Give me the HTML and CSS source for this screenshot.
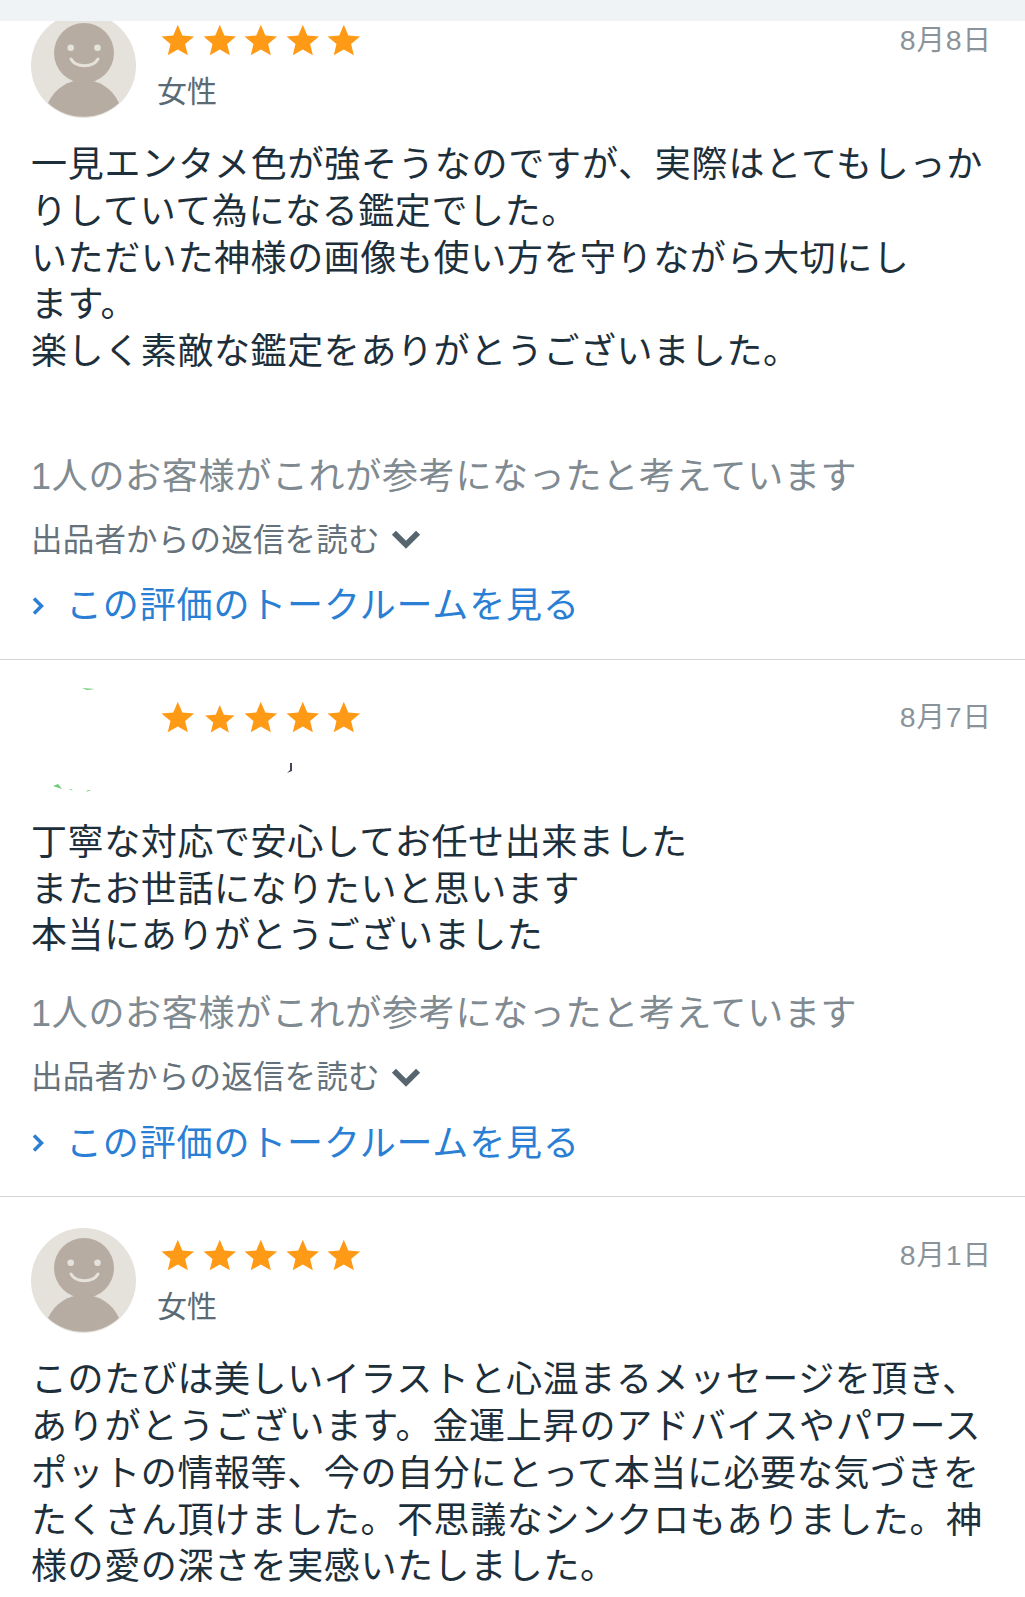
FILE: index.html
```html
<!DOCTYPE html>
<html lang="ja">
<head>
<meta charset="utf-8">
<title>評価</title>
<link rel="stylesheet" href="styles.css">
</head>
<body>
<svg class="defs" width="0" height="0" aria-hidden="true">
  <defs>
    <symbol id="star" viewBox="0 0 34 32"><path d="M17 0.5 21.6 11.4 33.5 12.4 24.4 20.1 27.2 31.5 17 25.6 6.800 31.5 9.600 20.1 0.500 12.4 12.400 11.4Z"/></symbol>
    <symbol id="avatar" viewBox="0 0 105 105">
      <circle cx="52.5" cy="52.5" r="52.5" fill="#e5e2dc"/>
      <circle cx="53" cy="40" r="30" fill="#b7aca2"/>
      <path d="M17 90C24 75 37 67 52.5 67S81 75 88 90A52.5 52.5 0 0 1 17 90Z" fill="#b7aca2"/>
      <circle cx="39.7" cy="34.7" r="3.3" fill="#e5e2dc"/>
      <circle cx="66.5" cy="34.7" r="3.3" fill="#e5e2dc"/>
      <path d="M40 46C45 55 62 55 67 46" fill="none" stroke="#e5e2dc" stroke-width="3" stroke-linecap="round"/>
    </symbol>
    <symbol id="chev-down" viewBox="0 0 28 20"><path d="M2.500 3.500 14 15 25.500 3.500" fill="none" stroke="#57656e" stroke-width="5.500"/></symbol>
    <symbol id="chev-right" viewBox="0 0 12 20"><path d="M2 2.500 9.500 10 2 17.500" fill="none" stroke="#2a7fd4" stroke-width="3.500"/></symbol>
  </defs>
</svg>
<div class="topbar"></div>
<main class="list">
  <article class="review">
    <header class="head">
      <svg class="avatar"><use href="#avatar"/></svg>
      <div class="who">
        <div class="stars">
          <svg class="star"><use href="#star"/></svg><svg class="star"><use href="#star"/></svg><svg class="star"><use href="#star"/></svg><svg class="star"><use href="#star"/></svg><svg class="star"><use href="#star"/></svg>
        </div>
        <div class="name">女性</div>
      </div>
      <time class="date">8月8日</time>
    </header>
    <p class="body"><span class="wide">一見エンタメ色が強そうなのですが、実際はとてもしっか</span><br>りしていて為になる鑑定でした。<br>いただいた神様の画像も使い方を守りながら大切にし<br>ます。<br>楽しく素敵な鑑定をありがとうございました。<br>&nbsp;</p>
    <p class="helpful">1人のお客様がこれが参考になったと考えています</p>
    <div class="reply">出品者からの返信を読む<svg class="chev-down"><use href="#chev-down"/></svg></div>
    <a class="talk"><svg class="chev-right"><use href="#chev-right"/></svg>この評価のトークルームを見る</a>
  </article>
  <article class="review">
    <header class="head">
      <svg class="avatar" viewBox="0 0 105 105">
        <path d="M22 95 31 98 27 93Z M38 98 42 100 40 98Z M55 101 60 99 57 99Z M51 -3 64 -2 56 -1Z" fill="#6ecb73"/>
      </svg>
      <div class="who">
        <div class="stars">
          <svg class="star"><use href="#star"/></svg><svg class="star star-small"><use href="#star"/></svg><svg class="star"><use href="#star"/></svg><svg class="star"><use href="#star"/></svg><svg class="star"><use href="#star"/></svg>
        </div>
        <div class="name name-hidden">&nbsp;<svg class="speck" viewBox="0 0 14 14"><path d="M9 3h2v8l-5 2 3-3Z" fill="#445"/></svg></div>
      </div>
      <time class="date">8月7日</time>
    </header>
    <p class="body">丁寧な対応で安心してお任せ出来ました<br>またお世話になりたいと思います<br>本当にありがとうございました</p>
    <p class="helpful">1人のお客様がこれが参考になったと考えています</p>
    <div class="reply">出品者からの返信を読む<svg class="chev-down"><use href="#chev-down"/></svg></div>
    <a class="talk"><svg class="chev-right"><use href="#chev-right"/></svg>この評価のトークルームを見る</a>
  </article>
  <article class="review">
    <header class="head">
      <svg class="avatar"><use href="#avatar"/></svg>
      <div class="who">
        <div class="stars">
          <svg class="star"><use href="#star"/></svg><svg class="star"><use href="#star"/></svg><svg class="star"><use href="#star"/></svg><svg class="star"><use href="#star"/></svg><svg class="star"><use href="#star"/></svg>
        </div>
        <div class="name">女性</div>
      </div>
      <time class="date">8月1日</time>
    </header>
    <p class="body">このたびは美しいイラストと心温まるメッセージを頂き、<br><span class="wide">ありがとうございます。金運上昇のアドバイスやパワース</span><br>ポットの情報等、今の自分にとって本当に必要な気づきを<br>たくさん頂けました。不思議なシンクロもありました。神<br>様の愛の深さを実感いたしました。</p>
  </article>
</main>
</body>
</html>
```
FILE: styles.css
```css
* { box-sizing: border-box; }
html, body { margin: 0; padding: 0; background: #fff; }
body {
  width: 1025px;
  height: 1597px;
  overflow: hidden;
  position: relative;
  font-family: "Liberation Sans", "Noto Sans CJK JP", sans-serif;
  color: #1d2f3b;
}
.defs { position: absolute; }
.topbar {
  position: absolute;
  top: 0;
  left: 0;
  right: 0;
  height: 21px;
  background: #eff3f5;
  z-index: 2;
}
.list { margin-top: -18px; }
.review {
  padding: 31px 33px 29.500px 31px;
  border-bottom: 1px solid #d2d4d5;
}
.review:last-child { border-bottom: 0; }
.head {
  display: flex;
  align-items: flex-start;
  height: 105px;
}
.avatar { width: 105px; height: 105px; flex: none; overflow: visible; }
.who { flex: 1; padding-left: 25px; }
.stars { display: flex; gap: 8px; height: 32px; margin-top: 10.500px; }
.star { width: 33.600px; height: 32px; fill: #ff9a17; flex: none; }
.star-small { transform: scale(.9) translateY(2px); }
.name {
  font-size: 30px;
  line-height: 40px;
  height: 40px;
  color: #5a6a75;
  margin-top: 16.500px;
  margin-left: -4px;
}
.name-hidden { position: relative; }
.speck { position: absolute; left: 124px; top: 10px; width: 14px; height: 14px; }
.date {
  font-size: 28.500px;
  letter-spacing: .9px;
  line-height: 36px;
  color: #8a9399;
  margin-top: 8.500px;
}
.body {
  margin: 24px 0 0;
  font-size: 36px;
  letter-spacing: .6px;
  line-height: 46.800px;
  white-space: nowrap;
}
.wide { letter-spacing: .8px; }
.helpful {
  margin: 30px 0 0;
  font-size: 36px;
  letter-spacing: .7px;
  line-height: 47px;
  color: #808a91;
  white-space: nowrap;
}
.reply {
  display: flex;
  align-items: center;
  margin-top: 20px;
  font-size: 31.500px;
  letter-spacing: .2px;
  line-height: 40px;
  color: #65727b;
  white-space: nowrap;
}
.chev-down { width: 30px; height: 21px; margin-left: 11px; flex: none; }
.talk {
  display: flex;
  align-items: center;
  margin-top: 22.500px;
  font-size: 36px;
  letter-spacing: .85px;
  line-height: 47px;
  color: #2a7fd4;
  white-space: nowrap;
}
.chev-right { width: 12px; height: 20px; margin: 0 22px 0 1px; flex: none; }
```
